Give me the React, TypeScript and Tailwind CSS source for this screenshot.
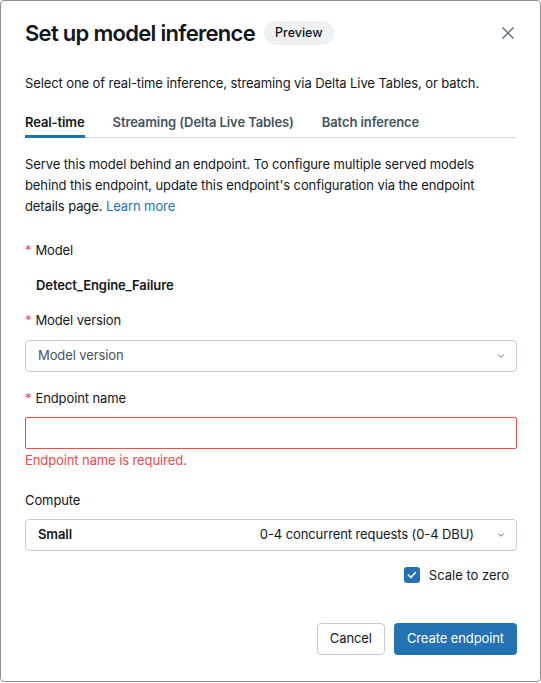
import React from "react";

function Chevron() {
  return (
    <svg width="10" height="10" viewBox="0 0 16 16" fill="none">
      <path d="M4 6l4 4 4-4" stroke="#5f7281" strokeWidth="1.6" strokeLinecap="round" strokeLinejoin="round" />
    </svg>
  );
}

export default function App() {
  return (
    <div className="w-[541px] h-[683px] bg-white" style={{ fontFamily: "Inter, 'Noto Sans', sans-serif" }}>
      <div className="w-[541px] h-[682px] border border-[#8e8e8e] rounded-[4px] bg-white pl-[24px] pr-[23px] pt-[17px] text-[#11171c] tracking-[-0.1px]">
        <div className="flex items-center h-[30px]">
          <h1 className="text-[22px] font-semibold tracking-[-0.7px] text-[#11171c] leading-[30px]">Set up model inference</h1>
          <span className="ml-[9px] h-[24px] px-[11px] rounded-full bg-[#eef0f2] text-[12.5px] font-medium text-[#11171c] flex items-center tracking-normal">Preview</span>
          <div className="ml-auto mr-[2px]">
            <svg width="14" height="14" viewBox="0 0 14 14" fill="none">
              <path d="M1.5 1.5l11 11M12.5 1.5l-11 11" stroke="#5f7281" strokeWidth="1.5" />
            </svg>
          </div>
        </div>

        <p className="mt-[25px] text-[13px] leading-[20px]">Select one of real-time inference, streaming via Delta Live Tables, or batch.</p>

        <div className="mt-[20px] flex gap-[28px] border-b border-[#d1d9e1] text-[13px] font-semibold">
          <div className="pb-[2px] border-b-[3px] border-[#2272b4] -mb-[1px] text-[#11171c]">Real-time</div>
          <div className="pb-[2px] text-[#445461]">Streaming (Delta Live Tables)</div>
          <div className="pb-[2px] text-[#445461]">Batch inference</div>
        </div>

        <div className="mt-[16px] text-[13px] leading-[21px]">
          Serve this model behind an endpoint. To configure multiple served models behind this endpoint, update this endpoint's configuration via the endpoint details page. <a className="text-[#2272b4]">Learn more</a>
        </div>

        <div className="mt-[23px] text-[13px] leading-[20px]">
          <span className="text-[#e84c4c] mr-[4px]">*</span>Model
        </div>
        <div className="mt-[15px] pl-[11px] text-[13px] font-semibold leading-[20px]">Detect_Engine_Failure</div>

        <div className="mt-[15px] text-[13px] leading-[20px]">
          <span className="text-[#e84c4c] mr-[4px]">*</span>Model version
        </div>
        <div className="mt-[10px] h-[32px] border border-[#c0cdd8] rounded-[4px] flex items-center pl-[12px] pr-[10px] text-[13px] text-[#445461]">
          <span>Model version</span>
          <span className="ml-auto"><Chevron /></span>
        </div>

        <div className="mt-[16px] text-[13px] leading-[20px]">
          <span className="text-[#e84c4c] mr-[4px]">*</span>Endpoint name
        </div>
        <div className="mt-[9px] h-[32px] border border-[#f04a4a] rounded-[2px]"></div>
        <div className="mt-[1px] text-[13px] leading-[20px] text-[#f04a4a]">Endpoint name is required.</div>

        <div className="mt-[20px] text-[13px] leading-[20px]">Compute</div>
        <div className="mt-[9px] h-[32px] border border-[#c0cdd8] rounded-[4px] flex items-center pl-[12px] pr-[10px] text-[13px]">
          <span className="font-semibold">Small</span>
          <span className="ml-auto mr-[22px]">0-4 concurrent requests (0-4 DBU)</span>
          <Chevron />
        </div>

        <div className="mt-[15px] flex justify-end pr-[8px]">
          <label className="flex items-center gap-[9px] text-[13px] tracking-normal">
            <span className="w-[16px] h-[16px] rounded-[3px] bg-[#2272b4] flex items-center justify-center">
              <svg width="10" height="10" viewBox="0 0 10 10" fill="none">
                <path d="M1.5 5.2l2.3 2.3 4.7-5" stroke="white" strokeWidth="1.7" strokeLinecap="round" strokeLinejoin="round" />
              </svg>
            </span>
            Scale to zero
          </label>
        </div>

        <div className="mt-[38px] flex justify-end gap-[9px]">
          <button className="h-[32px] px-[12px] border border-[#c0cdd8] rounded-[4px] text-[13px] text-[#11171c] bg-white">Cancel</button>
          <button className="h-[32px] px-[13px] rounded-[4px] text-[13px] text-white bg-[#2272b4]">Create endpoint</button>
        </div>
      </div>
    </div>
  );
}
